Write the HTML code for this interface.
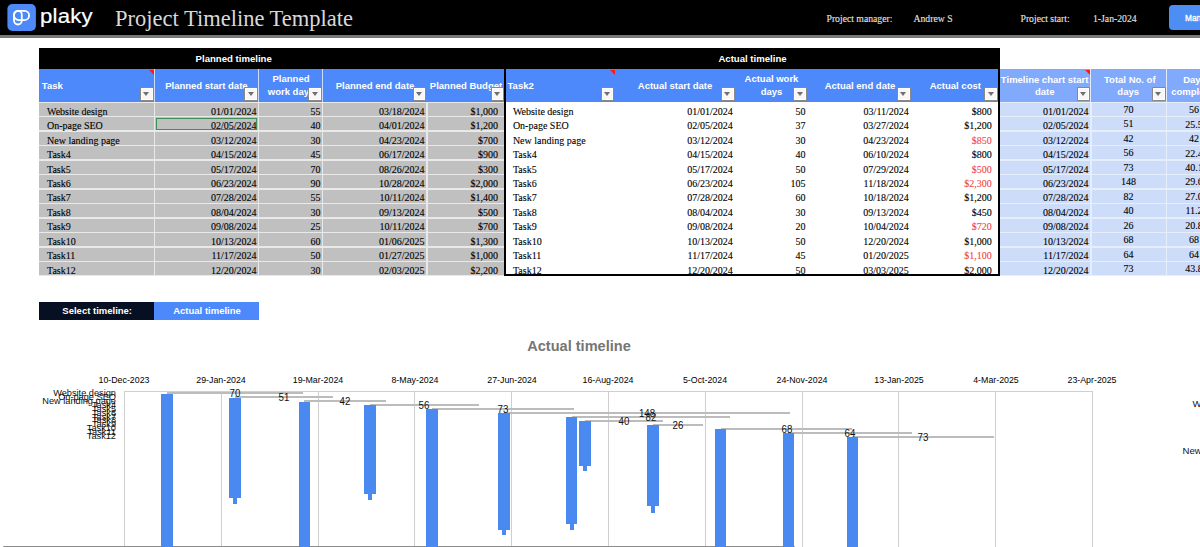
<!DOCTYPE html><html><head><meta charset="utf-8"><style>
*{margin:0;padding:0}
html,body{width:1200px;height:547px;overflow:hidden;background:#fff;position:relative}
.t,.r,.dd,.tri{position:absolute}
.t{white-space:nowrap}
.s{-webkit-text-stroke:0.1px currentColor}
.dd{width:13.5px;height:13.5px;background:#f7f7f7;border:1px solid rgba(0,0,0,0.45);border-radius:1.2px;box-sizing:border-box;box-shadow:inset 0 0 0 1px #fff}
.dd i{position:absolute;left:2.4px;top:3.9px;width:0;height:0;border-style:solid;border-width:4.4px 3.6px 0 3.6px;border-color:#6f6f6f transparent transparent transparent}
.tri{width:0;height:0;border-style:solid;border-color:transparent #ff1a1a transparent transparent}
</style></head><body><div class="r" style="left:0.00px;top:0.00px;width:1200.00px;height:35.00px;background:#000;"></div>
<div class="r" style="left:0.00px;top:35.00px;width:1200.00px;height:3.00px;background:#787878;"></div>
<svg class="r" style="left:7px;top:4px" width="29" height="27" viewBox="0 0 29 27"><rect x="0.4" y="0" width="28.5" height="27" rx="5" fill="#4d8af7"/><rect x="7" y="6.8" width="7.8" height="13.7" rx="3.9" fill="none" stroke="#fff" stroke-width="1.8"/><rect x="7" y="6.8" width="15.1" height="9.3" rx="4.65" fill="none" stroke="#fff" stroke-width="1.8"/></svg>
<div class="t" style="left:40.20px;top:4.01px;font-family:'Liberation Sans', sans-serif;font-size:20.5px;line-height:23.57px;color:#fff;font-weight:normal;letter-spacing:0.2px;-webkit-text-stroke:0.2px #fff;transform-origin:0 50%;transform:scaleX(1.08);">plaky</div>
<div class="t" style="left:115.00px;top:5.87px;font-family:'Liberation Serif', serif;font-size:22.5px;line-height:25.87px;color:#d9d9d9;font-weight:normal;">Project Timeline Template</div>
<div class="t s" style="left:826.50px;top:13.05px;font-family:'Liberation Serif', serif;font-size:9.7px;line-height:11.15px;color:#e6e6e6;font-weight:normal;">Project manager:</div>
<div class="t s" style="left:913.50px;top:13.05px;font-family:'Liberation Serif', serif;font-size:9.7px;line-height:11.15px;color:#e6e6e6;font-weight:normal;">Andrew S</div>
<div class="t s" style="left:1020.50px;top:13.05px;font-family:'Liberation Serif', serif;font-size:9.7px;line-height:11.15px;color:#e6e6e6;font-weight:normal;">Project start:</div>
<div class="t s" style="left:1093.00px;top:13.05px;font-family:'Liberation Serif', serif;font-size:9.7px;line-height:11.15px;color:#e6e6e6;font-weight:normal;">1-Jan-2024</div>
<div class="r" style="left:1169.00px;top:5.10px;width:60.00px;height:25.20px;background:#4d8ef5;border-radius:4px;"></div>
<div class="t" style="left:1185.30px;top:11.77px;font-family:'Liberation Sans', sans-serif;font-size:9.8px;line-height:11.27px;color:#fff;font-weight:normal;transform-origin:0 50%;transform:scaleX(0.85);-webkit-text-stroke:0.35px #fff;">Manage</div>
<div class="r" style="left:39.00px;top:48.20px;width:466.00px;height:20.60px;background:#000;"></div>
<div class="t" style="left:-66.30px;width:600px;text-align:center;top:53.35px;font-family:'Liberation Sans', sans-serif;font-size:9.6px;line-height:11.04px;color:#fff;font-weight:bold;">Planned timeline</div>
<div class="r" style="left:504.00px;top:47.50px;width:496.00px;height:21.30px;background:#000;"></div>
<div class="t" style="left:452.50px;width:600px;text-align:center;top:53.35px;font-family:'Liberation Sans', sans-serif;font-size:9.6px;line-height:11.04px;color:#fff;font-weight:bold;">Actual timeline</div>
<div class="r" style="left:39.00px;top:68.80px;width:466.00px;height:33.00px;background:#4e89fb;"></div>
<div class="r" style="left:506.00px;top:68.80px;width:492.50px;height:33.00px;background:#4e89fb;"></div>
<div class="r" style="left:1000.00px;top:68.80px;width:200.00px;height:33.00px;background:#81aafd;"></div>
<div class="r" style="left:154.20px;top:68.80px;width:1.20px;height:33.70px;background:#cfdcf7;"></div>
<div class="r" style="left:258.20px;top:68.80px;width:1.20px;height:33.70px;background:#cfdcf7;"></div>
<div class="r" style="left:321.60px;top:68.80px;width:1.20px;height:33.70px;background:#cfdcf7;"></div>
<div class="r" style="left:1090.30px;top:68.80px;width:1.20px;height:33.70px;background:#e3ebfb;"></div>
<div class="r" style="left:1166.20px;top:68.80px;width:1.20px;height:33.70px;background:#e3ebfb;"></div>
<div class="r" style="left:39.00px;top:101.80px;width:465.00px;height:174.00px;background:#e9e9e9;"></div>
<div class="r" style="left:1000.00px;top:101.80px;width:200.00px;height:174.00px;background:#e6eefc;"></div>
<div class="r" style="left:39.00px;top:102.90px;width:115.20px;height:13.08px;background:#c0c0c0;"></div>
<div class="r" style="left:155.40px;top:102.90px;width:102.80px;height:13.08px;background:#c0c0c0;"></div>
<div class="r" style="left:259.40px;top:102.90px;width:62.20px;height:13.08px;background:#c0c0c0;"></div>
<div class="r" style="left:322.80px;top:102.90px;width:103.50px;height:13.08px;background:#c0c0c0;"></div>
<div class="r" style="left:427.50px;top:102.90px;width:76.50px;height:13.08px;background:#c0c0c0;"></div>
<div class="r" style="left:39.00px;top:117.38px;width:115.20px;height:13.08px;background:#c0c0c0;"></div>
<div class="r" style="left:155.40px;top:117.38px;width:102.80px;height:13.08px;background:#c0c0c0;"></div>
<div class="r" style="left:259.40px;top:117.38px;width:62.20px;height:13.08px;background:#c0c0c0;"></div>
<div class="r" style="left:322.80px;top:117.38px;width:103.50px;height:13.08px;background:#c0c0c0;"></div>
<div class="r" style="left:427.50px;top:117.38px;width:76.50px;height:13.08px;background:#c0c0c0;"></div>
<div class="r" style="left:39.00px;top:131.86px;width:115.20px;height:13.08px;background:#c0c0c0;"></div>
<div class="r" style="left:155.40px;top:131.86px;width:102.80px;height:13.08px;background:#c0c0c0;"></div>
<div class="r" style="left:259.40px;top:131.86px;width:62.20px;height:13.08px;background:#c0c0c0;"></div>
<div class="r" style="left:322.80px;top:131.86px;width:103.50px;height:13.08px;background:#c0c0c0;"></div>
<div class="r" style="left:427.50px;top:131.86px;width:76.50px;height:13.08px;background:#c0c0c0;"></div>
<div class="r" style="left:39.00px;top:146.34px;width:115.20px;height:13.08px;background:#c0c0c0;"></div>
<div class="r" style="left:155.40px;top:146.34px;width:102.80px;height:13.08px;background:#c0c0c0;"></div>
<div class="r" style="left:259.40px;top:146.34px;width:62.20px;height:13.08px;background:#c0c0c0;"></div>
<div class="r" style="left:322.80px;top:146.34px;width:103.50px;height:13.08px;background:#c0c0c0;"></div>
<div class="r" style="left:427.50px;top:146.34px;width:76.50px;height:13.08px;background:#c0c0c0;"></div>
<div class="r" style="left:39.00px;top:160.82px;width:115.20px;height:13.08px;background:#c0c0c0;"></div>
<div class="r" style="left:155.40px;top:160.82px;width:102.80px;height:13.08px;background:#c0c0c0;"></div>
<div class="r" style="left:259.40px;top:160.82px;width:62.20px;height:13.08px;background:#c0c0c0;"></div>
<div class="r" style="left:322.80px;top:160.82px;width:103.50px;height:13.08px;background:#c0c0c0;"></div>
<div class="r" style="left:427.50px;top:160.82px;width:76.50px;height:13.08px;background:#c0c0c0;"></div>
<div class="r" style="left:39.00px;top:175.30px;width:115.20px;height:13.08px;background:#c0c0c0;"></div>
<div class="r" style="left:155.40px;top:175.30px;width:102.80px;height:13.08px;background:#c0c0c0;"></div>
<div class="r" style="left:259.40px;top:175.30px;width:62.20px;height:13.08px;background:#c0c0c0;"></div>
<div class="r" style="left:322.80px;top:175.30px;width:103.50px;height:13.08px;background:#c0c0c0;"></div>
<div class="r" style="left:427.50px;top:175.30px;width:76.50px;height:13.08px;background:#c0c0c0;"></div>
<div class="r" style="left:39.00px;top:189.78px;width:115.20px;height:13.08px;background:#c0c0c0;"></div>
<div class="r" style="left:155.40px;top:189.78px;width:102.80px;height:13.08px;background:#c0c0c0;"></div>
<div class="r" style="left:259.40px;top:189.78px;width:62.20px;height:13.08px;background:#c0c0c0;"></div>
<div class="r" style="left:322.80px;top:189.78px;width:103.50px;height:13.08px;background:#c0c0c0;"></div>
<div class="r" style="left:427.50px;top:189.78px;width:76.50px;height:13.08px;background:#c0c0c0;"></div>
<div class="r" style="left:39.00px;top:204.26px;width:115.20px;height:13.08px;background:#c0c0c0;"></div>
<div class="r" style="left:155.40px;top:204.26px;width:102.80px;height:13.08px;background:#c0c0c0;"></div>
<div class="r" style="left:259.40px;top:204.26px;width:62.20px;height:13.08px;background:#c0c0c0;"></div>
<div class="r" style="left:322.80px;top:204.26px;width:103.50px;height:13.08px;background:#c0c0c0;"></div>
<div class="r" style="left:427.50px;top:204.26px;width:76.50px;height:13.08px;background:#c0c0c0;"></div>
<div class="r" style="left:39.00px;top:218.74px;width:115.20px;height:13.08px;background:#c0c0c0;"></div>
<div class="r" style="left:155.40px;top:218.74px;width:102.80px;height:13.08px;background:#c0c0c0;"></div>
<div class="r" style="left:259.40px;top:218.74px;width:62.20px;height:13.08px;background:#c0c0c0;"></div>
<div class="r" style="left:322.80px;top:218.74px;width:103.50px;height:13.08px;background:#c0c0c0;"></div>
<div class="r" style="left:427.50px;top:218.74px;width:76.50px;height:13.08px;background:#c0c0c0;"></div>
<div class="r" style="left:39.00px;top:233.22px;width:115.20px;height:13.08px;background:#c0c0c0;"></div>
<div class="r" style="left:155.40px;top:233.22px;width:102.80px;height:13.08px;background:#c0c0c0;"></div>
<div class="r" style="left:259.40px;top:233.22px;width:62.20px;height:13.08px;background:#c0c0c0;"></div>
<div class="r" style="left:322.80px;top:233.22px;width:103.50px;height:13.08px;background:#c0c0c0;"></div>
<div class="r" style="left:427.50px;top:233.22px;width:76.50px;height:13.08px;background:#c0c0c0;"></div>
<div class="r" style="left:39.00px;top:247.70px;width:115.20px;height:13.08px;background:#c0c0c0;"></div>
<div class="r" style="left:155.40px;top:247.70px;width:102.80px;height:13.08px;background:#c0c0c0;"></div>
<div class="r" style="left:259.40px;top:247.70px;width:62.20px;height:13.08px;background:#c0c0c0;"></div>
<div class="r" style="left:322.80px;top:247.70px;width:103.50px;height:13.08px;background:#c0c0c0;"></div>
<div class="r" style="left:427.50px;top:247.70px;width:76.50px;height:13.08px;background:#c0c0c0;"></div>
<div class="r" style="left:39.00px;top:262.18px;width:115.20px;height:13.08px;background:#c0c0c0;"></div>
<div class="r" style="left:155.40px;top:262.18px;width:102.80px;height:13.08px;background:#c0c0c0;"></div>
<div class="r" style="left:259.40px;top:262.18px;width:62.20px;height:13.08px;background:#c0c0c0;"></div>
<div class="r" style="left:322.80px;top:262.18px;width:103.50px;height:13.08px;background:#c0c0c0;"></div>
<div class="r" style="left:427.50px;top:262.18px;width:76.50px;height:13.08px;background:#c0c0c0;"></div>
<div class="r" style="left:1000.00px;top:102.90px;width:90.30px;height:13.08px;background:#cddcf9;"></div>
<div class="r" style="left:1091.50px;top:102.90px;width:74.70px;height:13.08px;background:#cddcf9;"></div>
<div class="r" style="left:1167.40px;top:102.90px;width:32.60px;height:13.08px;background:#cddcf9;"></div>
<div class="r" style="left:1000.00px;top:117.38px;width:90.30px;height:13.08px;background:#cddcf9;"></div>
<div class="r" style="left:1091.50px;top:117.38px;width:74.70px;height:13.08px;background:#cddcf9;"></div>
<div class="r" style="left:1167.40px;top:117.38px;width:32.60px;height:13.08px;background:#cddcf9;"></div>
<div class="r" style="left:1000.00px;top:131.86px;width:90.30px;height:13.08px;background:#cddcf9;"></div>
<div class="r" style="left:1091.50px;top:131.86px;width:74.70px;height:13.08px;background:#cddcf9;"></div>
<div class="r" style="left:1167.40px;top:131.86px;width:32.60px;height:13.08px;background:#cddcf9;"></div>
<div class="r" style="left:1000.00px;top:146.34px;width:90.30px;height:13.08px;background:#cddcf9;"></div>
<div class="r" style="left:1091.50px;top:146.34px;width:74.70px;height:13.08px;background:#cddcf9;"></div>
<div class="r" style="left:1167.40px;top:146.34px;width:32.60px;height:13.08px;background:#cddcf9;"></div>
<div class="r" style="left:1000.00px;top:160.82px;width:90.30px;height:13.08px;background:#cddcf9;"></div>
<div class="r" style="left:1091.50px;top:160.82px;width:74.70px;height:13.08px;background:#cddcf9;"></div>
<div class="r" style="left:1167.40px;top:160.82px;width:32.60px;height:13.08px;background:#cddcf9;"></div>
<div class="r" style="left:1000.00px;top:175.30px;width:90.30px;height:13.08px;background:#cddcf9;"></div>
<div class="r" style="left:1091.50px;top:175.30px;width:74.70px;height:13.08px;background:#cddcf9;"></div>
<div class="r" style="left:1167.40px;top:175.30px;width:32.60px;height:13.08px;background:#cddcf9;"></div>
<div class="r" style="left:1000.00px;top:189.78px;width:90.30px;height:13.08px;background:#cddcf9;"></div>
<div class="r" style="left:1091.50px;top:189.78px;width:74.70px;height:13.08px;background:#cddcf9;"></div>
<div class="r" style="left:1167.40px;top:189.78px;width:32.60px;height:13.08px;background:#cddcf9;"></div>
<div class="r" style="left:1000.00px;top:204.26px;width:90.30px;height:13.08px;background:#cddcf9;"></div>
<div class="r" style="left:1091.50px;top:204.26px;width:74.70px;height:13.08px;background:#cddcf9;"></div>
<div class="r" style="left:1167.40px;top:204.26px;width:32.60px;height:13.08px;background:#cddcf9;"></div>
<div class="r" style="left:1000.00px;top:218.74px;width:90.30px;height:13.08px;background:#cddcf9;"></div>
<div class="r" style="left:1091.50px;top:218.74px;width:74.70px;height:13.08px;background:#cddcf9;"></div>
<div class="r" style="left:1167.40px;top:218.74px;width:32.60px;height:13.08px;background:#cddcf9;"></div>
<div class="r" style="left:1000.00px;top:233.22px;width:90.30px;height:13.08px;background:#cddcf9;"></div>
<div class="r" style="left:1091.50px;top:233.22px;width:74.70px;height:13.08px;background:#cddcf9;"></div>
<div class="r" style="left:1167.40px;top:233.22px;width:32.60px;height:13.08px;background:#cddcf9;"></div>
<div class="r" style="left:1000.00px;top:247.70px;width:90.30px;height:13.08px;background:#cddcf9;"></div>
<div class="r" style="left:1091.50px;top:247.70px;width:74.70px;height:13.08px;background:#cddcf9;"></div>
<div class="r" style="left:1167.40px;top:247.70px;width:32.60px;height:13.08px;background:#cddcf9;"></div>
<div class="r" style="left:1000.00px;top:262.18px;width:90.30px;height:13.08px;background:#cddcf9;"></div>
<div class="r" style="left:1091.50px;top:262.18px;width:74.70px;height:13.08px;background:#cddcf9;"></div>
<div class="r" style="left:1167.40px;top:262.18px;width:32.60px;height:13.08px;background:#cddcf9;"></div>
<div class="r" style="left:503.80px;top:47.50px;width:2.00px;height:228.50px;background:#000;"></div>
<div class="r" style="left:998.00px;top:47.50px;width:2.00px;height:228.50px;background:#000;"></div>
<div class="r" style="left:503.80px;top:274.30px;width:496.00px;height:1.80px;background:#000;"></div>
<div class="t s" style="left:47.00px;top:105.58px;font-family:'Liberation Serif', serif;font-size:10px;line-height:11.50px;color:#000;font-weight:normal;">Website design</div>
<div class="t s" style="left:-143.40px;width:400px;text-align:right;top:105.58px;font-family:'Liberation Serif', serif;font-size:10px;line-height:11.50px;color:#000;font-weight:normal;">01/01/2024</div>
<div class="t s" style="left:-79.60px;width:400px;text-align:right;top:105.58px;font-family:'Liberation Serif', serif;font-size:10px;line-height:11.50px;color:#000;font-weight:normal;">55</div>
<div class="t s" style="left:24.60px;width:400px;text-align:right;top:105.58px;font-family:'Liberation Serif', serif;font-size:10px;line-height:11.50px;color:#000;font-weight:normal;">03/18/2024</div>
<div class="t s" style="left:98.00px;width:400px;text-align:right;top:105.58px;font-family:'Liberation Serif', serif;font-size:10px;line-height:11.50px;color:#000;font-weight:normal;">$1,000</div>
<div class="t s" style="left:47.00px;top:120.06px;font-family:'Liberation Serif', serif;font-size:10px;line-height:11.50px;color:#000;font-weight:normal;">On-page SEO</div>
<div class="t s" style="left:-143.40px;width:400px;text-align:right;top:120.06px;font-family:'Liberation Serif', serif;font-size:10px;line-height:11.50px;color:#000;font-weight:normal;">02/05/2024</div>
<div class="t s" style="left:-79.60px;width:400px;text-align:right;top:120.06px;font-family:'Liberation Serif', serif;font-size:10px;line-height:11.50px;color:#000;font-weight:normal;">40</div>
<div class="t s" style="left:24.60px;width:400px;text-align:right;top:120.06px;font-family:'Liberation Serif', serif;font-size:10px;line-height:11.50px;color:#000;font-weight:normal;">04/01/2024</div>
<div class="t s" style="left:98.00px;width:400px;text-align:right;top:120.06px;font-family:'Liberation Serif', serif;font-size:10px;line-height:11.50px;color:#000;font-weight:normal;">$1,200</div>
<div class="t s" style="left:47.00px;top:134.53px;font-family:'Liberation Serif', serif;font-size:10px;line-height:11.50px;color:#000;font-weight:normal;">New landing page</div>
<div class="t s" style="left:-143.40px;width:400px;text-align:right;top:134.53px;font-family:'Liberation Serif', serif;font-size:10px;line-height:11.50px;color:#000;font-weight:normal;">03/12/2024</div>
<div class="t s" style="left:-79.60px;width:400px;text-align:right;top:134.53px;font-family:'Liberation Serif', serif;font-size:10px;line-height:11.50px;color:#000;font-weight:normal;">30</div>
<div class="t s" style="left:24.60px;width:400px;text-align:right;top:134.53px;font-family:'Liberation Serif', serif;font-size:10px;line-height:11.50px;color:#000;font-weight:normal;">04/23/2024</div>
<div class="t s" style="left:98.00px;width:400px;text-align:right;top:134.53px;font-family:'Liberation Serif', serif;font-size:10px;line-height:11.50px;color:#000;font-weight:normal;">$700</div>
<div class="t s" style="left:47.00px;top:149.01px;font-family:'Liberation Serif', serif;font-size:10px;line-height:11.50px;color:#000;font-weight:normal;">Task4</div>
<div class="t s" style="left:-143.40px;width:400px;text-align:right;top:149.01px;font-family:'Liberation Serif', serif;font-size:10px;line-height:11.50px;color:#000;font-weight:normal;">04/15/2024</div>
<div class="t s" style="left:-79.60px;width:400px;text-align:right;top:149.01px;font-family:'Liberation Serif', serif;font-size:10px;line-height:11.50px;color:#000;font-weight:normal;">45</div>
<div class="t s" style="left:24.60px;width:400px;text-align:right;top:149.01px;font-family:'Liberation Serif', serif;font-size:10px;line-height:11.50px;color:#000;font-weight:normal;">06/17/2024</div>
<div class="t s" style="left:98.00px;width:400px;text-align:right;top:149.01px;font-family:'Liberation Serif', serif;font-size:10px;line-height:11.50px;color:#000;font-weight:normal;">$900</div>
<div class="t s" style="left:47.00px;top:163.50px;font-family:'Liberation Serif', serif;font-size:10px;line-height:11.50px;color:#000;font-weight:normal;">Task5</div>
<div class="t s" style="left:-143.40px;width:400px;text-align:right;top:163.50px;font-family:'Liberation Serif', serif;font-size:10px;line-height:11.50px;color:#000;font-weight:normal;">05/17/2024</div>
<div class="t s" style="left:-79.60px;width:400px;text-align:right;top:163.50px;font-family:'Liberation Serif', serif;font-size:10px;line-height:11.50px;color:#000;font-weight:normal;">70</div>
<div class="t s" style="left:24.60px;width:400px;text-align:right;top:163.50px;font-family:'Liberation Serif', serif;font-size:10px;line-height:11.50px;color:#000;font-weight:normal;">08/26/2024</div>
<div class="t s" style="left:98.00px;width:400px;text-align:right;top:163.50px;font-family:'Liberation Serif', serif;font-size:10px;line-height:11.50px;color:#000;font-weight:normal;">$300</div>
<div class="t s" style="left:47.00px;top:177.98px;font-family:'Liberation Serif', serif;font-size:10px;line-height:11.50px;color:#000;font-weight:normal;">Task6</div>
<div class="t s" style="left:-143.40px;width:400px;text-align:right;top:177.98px;font-family:'Liberation Serif', serif;font-size:10px;line-height:11.50px;color:#000;font-weight:normal;">06/23/2024</div>
<div class="t s" style="left:-79.60px;width:400px;text-align:right;top:177.98px;font-family:'Liberation Serif', serif;font-size:10px;line-height:11.50px;color:#000;font-weight:normal;">90</div>
<div class="t s" style="left:24.60px;width:400px;text-align:right;top:177.98px;font-family:'Liberation Serif', serif;font-size:10px;line-height:11.50px;color:#000;font-weight:normal;">10/28/2024</div>
<div class="t s" style="left:98.00px;width:400px;text-align:right;top:177.98px;font-family:'Liberation Serif', serif;font-size:10px;line-height:11.50px;color:#000;font-weight:normal;">$2,000</div>
<div class="t s" style="left:47.00px;top:192.45px;font-family:'Liberation Serif', serif;font-size:10px;line-height:11.50px;color:#000;font-weight:normal;">Task7</div>
<div class="t s" style="left:-143.40px;width:400px;text-align:right;top:192.45px;font-family:'Liberation Serif', serif;font-size:10px;line-height:11.50px;color:#000;font-weight:normal;">07/28/2024</div>
<div class="t s" style="left:-79.60px;width:400px;text-align:right;top:192.45px;font-family:'Liberation Serif', serif;font-size:10px;line-height:11.50px;color:#000;font-weight:normal;">55</div>
<div class="t s" style="left:24.60px;width:400px;text-align:right;top:192.45px;font-family:'Liberation Serif', serif;font-size:10px;line-height:11.50px;color:#000;font-weight:normal;">10/11/2024</div>
<div class="t s" style="left:98.00px;width:400px;text-align:right;top:192.45px;font-family:'Liberation Serif', serif;font-size:10px;line-height:11.50px;color:#000;font-weight:normal;">$1,400</div>
<div class="t s" style="left:47.00px;top:206.94px;font-family:'Liberation Serif', serif;font-size:10px;line-height:11.50px;color:#000;font-weight:normal;">Task8</div>
<div class="t s" style="left:-143.40px;width:400px;text-align:right;top:206.94px;font-family:'Liberation Serif', serif;font-size:10px;line-height:11.50px;color:#000;font-weight:normal;">08/04/2024</div>
<div class="t s" style="left:-79.60px;width:400px;text-align:right;top:206.94px;font-family:'Liberation Serif', serif;font-size:10px;line-height:11.50px;color:#000;font-weight:normal;">30</div>
<div class="t s" style="left:24.60px;width:400px;text-align:right;top:206.94px;font-family:'Liberation Serif', serif;font-size:10px;line-height:11.50px;color:#000;font-weight:normal;">09/13/2024</div>
<div class="t s" style="left:98.00px;width:400px;text-align:right;top:206.94px;font-family:'Liberation Serif', serif;font-size:10px;line-height:11.50px;color:#000;font-weight:normal;">$500</div>
<div class="t s" style="left:47.00px;top:221.42px;font-family:'Liberation Serif', serif;font-size:10px;line-height:11.50px;color:#000;font-weight:normal;">Task9</div>
<div class="t s" style="left:-143.40px;width:400px;text-align:right;top:221.42px;font-family:'Liberation Serif', serif;font-size:10px;line-height:11.50px;color:#000;font-weight:normal;">09/08/2024</div>
<div class="t s" style="left:-79.60px;width:400px;text-align:right;top:221.42px;font-family:'Liberation Serif', serif;font-size:10px;line-height:11.50px;color:#000;font-weight:normal;">25</div>
<div class="t s" style="left:24.60px;width:400px;text-align:right;top:221.42px;font-family:'Liberation Serif', serif;font-size:10px;line-height:11.50px;color:#000;font-weight:normal;">10/11/2024</div>
<div class="t s" style="left:98.00px;width:400px;text-align:right;top:221.42px;font-family:'Liberation Serif', serif;font-size:10px;line-height:11.50px;color:#000;font-weight:normal;">$700</div>
<div class="t s" style="left:47.00px;top:235.89px;font-family:'Liberation Serif', serif;font-size:10px;line-height:11.50px;color:#000;font-weight:normal;">Task10</div>
<div class="t s" style="left:-143.40px;width:400px;text-align:right;top:235.89px;font-family:'Liberation Serif', serif;font-size:10px;line-height:11.50px;color:#000;font-weight:normal;">10/13/2024</div>
<div class="t s" style="left:-79.60px;width:400px;text-align:right;top:235.89px;font-family:'Liberation Serif', serif;font-size:10px;line-height:11.50px;color:#000;font-weight:normal;">60</div>
<div class="t s" style="left:24.60px;width:400px;text-align:right;top:235.89px;font-family:'Liberation Serif', serif;font-size:10px;line-height:11.50px;color:#000;font-weight:normal;">01/06/2025</div>
<div class="t s" style="left:98.00px;width:400px;text-align:right;top:235.89px;font-family:'Liberation Serif', serif;font-size:10px;line-height:11.50px;color:#000;font-weight:normal;">$1,300</div>
<div class="t s" style="left:47.00px;top:250.38px;font-family:'Liberation Serif', serif;font-size:10px;line-height:11.50px;color:#000;font-weight:normal;">Task11</div>
<div class="t s" style="left:-143.40px;width:400px;text-align:right;top:250.38px;font-family:'Liberation Serif', serif;font-size:10px;line-height:11.50px;color:#000;font-weight:normal;">11/17/2024</div>
<div class="t s" style="left:-79.60px;width:400px;text-align:right;top:250.38px;font-family:'Liberation Serif', serif;font-size:10px;line-height:11.50px;color:#000;font-weight:normal;">50</div>
<div class="t s" style="left:24.60px;width:400px;text-align:right;top:250.38px;font-family:'Liberation Serif', serif;font-size:10px;line-height:11.50px;color:#000;font-weight:normal;">01/27/2025</div>
<div class="t s" style="left:98.00px;width:400px;text-align:right;top:250.38px;font-family:'Liberation Serif', serif;font-size:10px;line-height:11.50px;color:#000;font-weight:normal;">$1,000</div>
<div class="t s" style="left:47.00px;top:264.86px;font-family:'Liberation Serif', serif;font-size:10px;line-height:11.50px;color:#000;font-weight:normal;">Task12</div>
<div class="t s" style="left:-143.40px;width:400px;text-align:right;top:264.86px;font-family:'Liberation Serif', serif;font-size:10px;line-height:11.50px;color:#000;font-weight:normal;">12/20/2024</div>
<div class="t s" style="left:-79.60px;width:400px;text-align:right;top:264.86px;font-family:'Liberation Serif', serif;font-size:10px;line-height:11.50px;color:#000;font-weight:normal;">30</div>
<div class="t s" style="left:24.60px;width:400px;text-align:right;top:264.86px;font-family:'Liberation Serif', serif;font-size:10px;line-height:11.50px;color:#000;font-weight:normal;">02/03/2025</div>
<div class="t s" style="left:98.00px;width:400px;text-align:right;top:264.86px;font-family:'Liberation Serif', serif;font-size:10px;line-height:11.50px;color:#000;font-weight:normal;">$2,200</div>
<div class="t s" style="left:512.90px;top:105.58px;font-family:'Liberation Serif', serif;font-size:10px;line-height:11.50px;color:#000;font-weight:normal;">Website design</div>
<div class="t s" style="left:332.80px;width:400px;text-align:right;top:105.58px;font-family:'Liberation Serif', serif;font-size:10px;line-height:11.50px;color:#000;font-weight:normal;">01/01/2024</div>
<div class="t s" style="left:405.60px;width:400px;text-align:right;top:105.58px;font-family:'Liberation Serif', serif;font-size:10px;line-height:11.50px;color:#000;font-weight:normal;">50</div>
<div class="t s" style="left:508.80px;width:400px;text-align:right;top:105.58px;font-family:'Liberation Serif', serif;font-size:10px;line-height:11.50px;color:#000;font-weight:normal;">03/11/2024</div>
<div class="t s" style="left:591.70px;width:400px;text-align:right;top:105.58px;font-family:'Liberation Serif', serif;font-size:10px;line-height:11.50px;color:#000;font-weight:normal;">$800</div>
<div class="t s" style="left:512.90px;top:120.06px;font-family:'Liberation Serif', serif;font-size:10px;line-height:11.50px;color:#000;font-weight:normal;">On-page SEO</div>
<div class="t s" style="left:332.80px;width:400px;text-align:right;top:120.06px;font-family:'Liberation Serif', serif;font-size:10px;line-height:11.50px;color:#000;font-weight:normal;">02/05/2024</div>
<div class="t s" style="left:405.60px;width:400px;text-align:right;top:120.06px;font-family:'Liberation Serif', serif;font-size:10px;line-height:11.50px;color:#000;font-weight:normal;">37</div>
<div class="t s" style="left:508.80px;width:400px;text-align:right;top:120.06px;font-family:'Liberation Serif', serif;font-size:10px;line-height:11.50px;color:#000;font-weight:normal;">03/27/2024</div>
<div class="t s" style="left:591.70px;width:400px;text-align:right;top:120.06px;font-family:'Liberation Serif', serif;font-size:10px;line-height:11.50px;color:#000;font-weight:normal;">$1,200</div>
<div class="t s" style="left:512.90px;top:134.53px;font-family:'Liberation Serif', serif;font-size:10px;line-height:11.50px;color:#000;font-weight:normal;">New landing page</div>
<div class="t s" style="left:332.80px;width:400px;text-align:right;top:134.53px;font-family:'Liberation Serif', serif;font-size:10px;line-height:11.50px;color:#000;font-weight:normal;">03/12/2024</div>
<div class="t s" style="left:405.60px;width:400px;text-align:right;top:134.53px;font-family:'Liberation Serif', serif;font-size:10px;line-height:11.50px;color:#000;font-weight:normal;">30</div>
<div class="t s" style="left:508.80px;width:400px;text-align:right;top:134.53px;font-family:'Liberation Serif', serif;font-size:10px;line-height:11.50px;color:#000;font-weight:normal;">04/23/2024</div>
<div class="t s" style="left:591.70px;width:400px;text-align:right;top:134.53px;font-family:'Liberation Serif', serif;font-size:10px;line-height:11.50px;color:#f04545;font-weight:normal;">$850</div>
<div class="t s" style="left:512.90px;top:149.01px;font-family:'Liberation Serif', serif;font-size:10px;line-height:11.50px;color:#000;font-weight:normal;">Task4</div>
<div class="t s" style="left:332.80px;width:400px;text-align:right;top:149.01px;font-family:'Liberation Serif', serif;font-size:10px;line-height:11.50px;color:#000;font-weight:normal;">04/15/2024</div>
<div class="t s" style="left:405.60px;width:400px;text-align:right;top:149.01px;font-family:'Liberation Serif', serif;font-size:10px;line-height:11.50px;color:#000;font-weight:normal;">40</div>
<div class="t s" style="left:508.80px;width:400px;text-align:right;top:149.01px;font-family:'Liberation Serif', serif;font-size:10px;line-height:11.50px;color:#000;font-weight:normal;">06/10/2024</div>
<div class="t s" style="left:591.70px;width:400px;text-align:right;top:149.01px;font-family:'Liberation Serif', serif;font-size:10px;line-height:11.50px;color:#000;font-weight:normal;">$800</div>
<div class="t s" style="left:512.90px;top:163.50px;font-family:'Liberation Serif', serif;font-size:10px;line-height:11.50px;color:#000;font-weight:normal;">Task5</div>
<div class="t s" style="left:332.80px;width:400px;text-align:right;top:163.50px;font-family:'Liberation Serif', serif;font-size:10px;line-height:11.50px;color:#000;font-weight:normal;">05/17/2024</div>
<div class="t s" style="left:405.60px;width:400px;text-align:right;top:163.50px;font-family:'Liberation Serif', serif;font-size:10px;line-height:11.50px;color:#000;font-weight:normal;">50</div>
<div class="t s" style="left:508.80px;width:400px;text-align:right;top:163.50px;font-family:'Liberation Serif', serif;font-size:10px;line-height:11.50px;color:#000;font-weight:normal;">07/29/2024</div>
<div class="t s" style="left:591.70px;width:400px;text-align:right;top:163.50px;font-family:'Liberation Serif', serif;font-size:10px;line-height:11.50px;color:#f04545;font-weight:normal;">$500</div>
<div class="t s" style="left:512.90px;top:177.98px;font-family:'Liberation Serif', serif;font-size:10px;line-height:11.50px;color:#000;font-weight:normal;">Task6</div>
<div class="t s" style="left:332.80px;width:400px;text-align:right;top:177.98px;font-family:'Liberation Serif', serif;font-size:10px;line-height:11.50px;color:#000;font-weight:normal;">06/23/2024</div>
<div class="t s" style="left:405.60px;width:400px;text-align:right;top:177.98px;font-family:'Liberation Serif', serif;font-size:10px;line-height:11.50px;color:#000;font-weight:normal;">105</div>
<div class="t s" style="left:508.80px;width:400px;text-align:right;top:177.98px;font-family:'Liberation Serif', serif;font-size:10px;line-height:11.50px;color:#000;font-weight:normal;">11/18/2024</div>
<div class="t s" style="left:591.70px;width:400px;text-align:right;top:177.98px;font-family:'Liberation Serif', serif;font-size:10px;line-height:11.50px;color:#f04545;font-weight:normal;">$2,300</div>
<div class="t s" style="left:512.90px;top:192.45px;font-family:'Liberation Serif', serif;font-size:10px;line-height:11.50px;color:#000;font-weight:normal;">Task7</div>
<div class="t s" style="left:332.80px;width:400px;text-align:right;top:192.45px;font-family:'Liberation Serif', serif;font-size:10px;line-height:11.50px;color:#000;font-weight:normal;">07/28/2024</div>
<div class="t s" style="left:405.60px;width:400px;text-align:right;top:192.45px;font-family:'Liberation Serif', serif;font-size:10px;line-height:11.50px;color:#000;font-weight:normal;">60</div>
<div class="t s" style="left:508.80px;width:400px;text-align:right;top:192.45px;font-family:'Liberation Serif', serif;font-size:10px;line-height:11.50px;color:#000;font-weight:normal;">10/18/2024</div>
<div class="t s" style="left:591.70px;width:400px;text-align:right;top:192.45px;font-family:'Liberation Serif', serif;font-size:10px;line-height:11.50px;color:#000;font-weight:normal;">$1,200</div>
<div class="t s" style="left:512.90px;top:206.94px;font-family:'Liberation Serif', serif;font-size:10px;line-height:11.50px;color:#000;font-weight:normal;">Task8</div>
<div class="t s" style="left:332.80px;width:400px;text-align:right;top:206.94px;font-family:'Liberation Serif', serif;font-size:10px;line-height:11.50px;color:#000;font-weight:normal;">08/04/2024</div>
<div class="t s" style="left:405.60px;width:400px;text-align:right;top:206.94px;font-family:'Liberation Serif', serif;font-size:10px;line-height:11.50px;color:#000;font-weight:normal;">30</div>
<div class="t s" style="left:508.80px;width:400px;text-align:right;top:206.94px;font-family:'Liberation Serif', serif;font-size:10px;line-height:11.50px;color:#000;font-weight:normal;">09/13/2024</div>
<div class="t s" style="left:591.70px;width:400px;text-align:right;top:206.94px;font-family:'Liberation Serif', serif;font-size:10px;line-height:11.50px;color:#000;font-weight:normal;">$450</div>
<div class="t s" style="left:512.90px;top:221.42px;font-family:'Liberation Serif', serif;font-size:10px;line-height:11.50px;color:#000;font-weight:normal;">Task9</div>
<div class="t s" style="left:332.80px;width:400px;text-align:right;top:221.42px;font-family:'Liberation Serif', serif;font-size:10px;line-height:11.50px;color:#000;font-weight:normal;">09/08/2024</div>
<div class="t s" style="left:405.60px;width:400px;text-align:right;top:221.42px;font-family:'Liberation Serif', serif;font-size:10px;line-height:11.50px;color:#000;font-weight:normal;">20</div>
<div class="t s" style="left:508.80px;width:400px;text-align:right;top:221.42px;font-family:'Liberation Serif', serif;font-size:10px;line-height:11.50px;color:#000;font-weight:normal;">10/04/2024</div>
<div class="t s" style="left:591.70px;width:400px;text-align:right;top:221.42px;font-family:'Liberation Serif', serif;font-size:10px;line-height:11.50px;color:#f04545;font-weight:normal;">$720</div>
<div class="t s" style="left:512.90px;top:235.89px;font-family:'Liberation Serif', serif;font-size:10px;line-height:11.50px;color:#000;font-weight:normal;">Task10</div>
<div class="t s" style="left:332.80px;width:400px;text-align:right;top:235.89px;font-family:'Liberation Serif', serif;font-size:10px;line-height:11.50px;color:#000;font-weight:normal;">10/13/2024</div>
<div class="t s" style="left:405.60px;width:400px;text-align:right;top:235.89px;font-family:'Liberation Serif', serif;font-size:10px;line-height:11.50px;color:#000;font-weight:normal;">50</div>
<div class="t s" style="left:508.80px;width:400px;text-align:right;top:235.89px;font-family:'Liberation Serif', serif;font-size:10px;line-height:11.50px;color:#000;font-weight:normal;">12/20/2024</div>
<div class="t s" style="left:591.70px;width:400px;text-align:right;top:235.89px;font-family:'Liberation Serif', serif;font-size:10px;line-height:11.50px;color:#000;font-weight:normal;">$1,000</div>
<div class="t s" style="left:512.90px;top:250.38px;font-family:'Liberation Serif', serif;font-size:10px;line-height:11.50px;color:#000;font-weight:normal;">Task11</div>
<div class="t s" style="left:332.80px;width:400px;text-align:right;top:250.38px;font-family:'Liberation Serif', serif;font-size:10px;line-height:11.50px;color:#000;font-weight:normal;">11/17/2024</div>
<div class="t s" style="left:405.60px;width:400px;text-align:right;top:250.38px;font-family:'Liberation Serif', serif;font-size:10px;line-height:11.50px;color:#000;font-weight:normal;">45</div>
<div class="t s" style="left:508.80px;width:400px;text-align:right;top:250.38px;font-family:'Liberation Serif', serif;font-size:10px;line-height:11.50px;color:#000;font-weight:normal;">01/20/2025</div>
<div class="t s" style="left:591.70px;width:400px;text-align:right;top:250.38px;font-family:'Liberation Serif', serif;font-size:10px;line-height:11.50px;color:#f04545;font-weight:normal;">$1,100</div>
<div class="t s" style="left:512.90px;top:264.86px;font-family:'Liberation Serif', serif;font-size:10px;line-height:11.50px;color:#000;font-weight:normal;">Task12</div>
<div class="t s" style="left:332.80px;width:400px;text-align:right;top:264.86px;font-family:'Liberation Serif', serif;font-size:10px;line-height:11.50px;color:#000;font-weight:normal;">12/20/2024</div>
<div class="t s" style="left:405.60px;width:400px;text-align:right;top:264.86px;font-family:'Liberation Serif', serif;font-size:10px;line-height:11.50px;color:#000;font-weight:normal;">50</div>
<div class="t s" style="left:508.80px;width:400px;text-align:right;top:264.86px;font-family:'Liberation Serif', serif;font-size:10px;line-height:11.50px;color:#000;font-weight:normal;">03/03/2025</div>
<div class="t s" style="left:591.70px;width:400px;text-align:right;top:264.86px;font-family:'Liberation Serif', serif;font-size:10px;line-height:11.50px;color:#000;font-weight:normal;">$2,000</div>
<div class="t s" style="left:688.50px;width:400px;text-align:right;top:105.58px;font-family:'Liberation Serif', serif;font-size:10px;line-height:11.50px;color:#000;font-weight:normal;">01/01/2024</div>
<div class="t s" style="left:828.50px;width:600px;text-align:center;top:103.78px;font-family:'Liberation Serif', serif;font-size:10px;line-height:11.50px;color:#000;font-weight:normal;">70</div>
<div class="t s" style="left:894.00px;width:600px;text-align:center;top:104.08px;font-family:'Liberation Serif', serif;font-size:10px;line-height:11.50px;color:#000;font-weight:normal;">56</div>
<div class="t s" style="left:688.50px;width:400px;text-align:right;top:120.06px;font-family:'Liberation Serif', serif;font-size:10px;line-height:11.50px;color:#000;font-weight:normal;">02/05/2024</div>
<div class="t s" style="left:828.50px;width:600px;text-align:center;top:118.26px;font-family:'Liberation Serif', serif;font-size:10px;line-height:11.50px;color:#000;font-weight:normal;">51</div>
<div class="t s" style="left:894.00px;width:600px;text-align:center;top:118.56px;font-family:'Liberation Serif', serif;font-size:10px;line-height:11.50px;color:#000;font-weight:normal;">25.5</div>
<div class="t s" style="left:688.50px;width:400px;text-align:right;top:134.53px;font-family:'Liberation Serif', serif;font-size:10px;line-height:11.50px;color:#000;font-weight:normal;">03/12/2024</div>
<div class="t s" style="left:828.50px;width:600px;text-align:center;top:132.73px;font-family:'Liberation Serif', serif;font-size:10px;line-height:11.50px;color:#000;font-weight:normal;">42</div>
<div class="t s" style="left:894.00px;width:600px;text-align:center;top:133.03px;font-family:'Liberation Serif', serif;font-size:10px;line-height:11.50px;color:#000;font-weight:normal;">42</div>
<div class="t s" style="left:688.50px;width:400px;text-align:right;top:149.01px;font-family:'Liberation Serif', serif;font-size:10px;line-height:11.50px;color:#000;font-weight:normal;">04/15/2024</div>
<div class="t s" style="left:828.50px;width:600px;text-align:center;top:147.21px;font-family:'Liberation Serif', serif;font-size:10px;line-height:11.50px;color:#000;font-weight:normal;">56</div>
<div class="t s" style="left:894.00px;width:600px;text-align:center;top:147.51px;font-family:'Liberation Serif', serif;font-size:10px;line-height:11.50px;color:#000;font-weight:normal;">22.4</div>
<div class="t s" style="left:688.50px;width:400px;text-align:right;top:163.50px;font-family:'Liberation Serif', serif;font-size:10px;line-height:11.50px;color:#000;font-weight:normal;">05/17/2024</div>
<div class="t s" style="left:828.50px;width:600px;text-align:center;top:161.69px;font-family:'Liberation Serif', serif;font-size:10px;line-height:11.50px;color:#000;font-weight:normal;">73</div>
<div class="t s" style="left:894.00px;width:600px;text-align:center;top:162.00px;font-family:'Liberation Serif', serif;font-size:10px;line-height:11.50px;color:#000;font-weight:normal;">40.1</div>
<div class="t s" style="left:688.50px;width:400px;text-align:right;top:177.98px;font-family:'Liberation Serif', serif;font-size:10px;line-height:11.50px;color:#000;font-weight:normal;">06/23/2024</div>
<div class="t s" style="left:828.50px;width:600px;text-align:center;top:176.18px;font-family:'Liberation Serif', serif;font-size:10px;line-height:11.50px;color:#000;font-weight:normal;">148</div>
<div class="t s" style="left:894.00px;width:600px;text-align:center;top:176.48px;font-family:'Liberation Serif', serif;font-size:10px;line-height:11.50px;color:#000;font-weight:normal;">29.6</div>
<div class="t s" style="left:688.50px;width:400px;text-align:right;top:192.45px;font-family:'Liberation Serif', serif;font-size:10px;line-height:11.50px;color:#000;font-weight:normal;">07/28/2024</div>
<div class="t s" style="left:828.50px;width:600px;text-align:center;top:190.65px;font-family:'Liberation Serif', serif;font-size:10px;line-height:11.50px;color:#000;font-weight:normal;">82</div>
<div class="t s" style="left:894.00px;width:600px;text-align:center;top:190.95px;font-family:'Liberation Serif', serif;font-size:10px;line-height:11.50px;color:#000;font-weight:normal;">27.0</div>
<div class="t s" style="left:688.50px;width:400px;text-align:right;top:206.94px;font-family:'Liberation Serif', serif;font-size:10px;line-height:11.50px;color:#000;font-weight:normal;">08/04/2024</div>
<div class="t s" style="left:828.50px;width:600px;text-align:center;top:205.13px;font-family:'Liberation Serif', serif;font-size:10px;line-height:11.50px;color:#000;font-weight:normal;">40</div>
<div class="t s" style="left:894.00px;width:600px;text-align:center;top:205.44px;font-family:'Liberation Serif', serif;font-size:10px;line-height:11.50px;color:#000;font-weight:normal;">11.2</div>
<div class="t s" style="left:688.50px;width:400px;text-align:right;top:221.42px;font-family:'Liberation Serif', serif;font-size:10px;line-height:11.50px;color:#000;font-weight:normal;">09/08/2024</div>
<div class="t s" style="left:828.50px;width:600px;text-align:center;top:219.62px;font-family:'Liberation Serif', serif;font-size:10px;line-height:11.50px;color:#000;font-weight:normal;">26</div>
<div class="t s" style="left:894.00px;width:600px;text-align:center;top:219.92px;font-family:'Liberation Serif', serif;font-size:10px;line-height:11.50px;color:#000;font-weight:normal;">20.8</div>
<div class="t s" style="left:688.50px;width:400px;text-align:right;top:235.89px;font-family:'Liberation Serif', serif;font-size:10px;line-height:11.50px;color:#000;font-weight:normal;">10/13/2024</div>
<div class="t s" style="left:828.50px;width:600px;text-align:center;top:234.09px;font-family:'Liberation Serif', serif;font-size:10px;line-height:11.50px;color:#000;font-weight:normal;">68</div>
<div class="t s" style="left:894.00px;width:600px;text-align:center;top:234.39px;font-family:'Liberation Serif', serif;font-size:10px;line-height:11.50px;color:#000;font-weight:normal;">68</div>
<div class="t s" style="left:688.50px;width:400px;text-align:right;top:250.38px;font-family:'Liberation Serif', serif;font-size:10px;line-height:11.50px;color:#000;font-weight:normal;">11/17/2024</div>
<div class="t s" style="left:828.50px;width:600px;text-align:center;top:248.57px;font-family:'Liberation Serif', serif;font-size:10px;line-height:11.50px;color:#000;font-weight:normal;">64</div>
<div class="t s" style="left:894.00px;width:600px;text-align:center;top:248.88px;font-family:'Liberation Serif', serif;font-size:10px;line-height:11.50px;color:#000;font-weight:normal;">64</div>
<div class="t s" style="left:688.50px;width:400px;text-align:right;top:264.86px;font-family:'Liberation Serif', serif;font-size:10px;line-height:11.50px;color:#000;font-weight:normal;">12/20/2024</div>
<div class="t s" style="left:828.50px;width:600px;text-align:center;top:263.06px;font-family:'Liberation Serif', serif;font-size:10px;line-height:11.50px;color:#000;font-weight:normal;">73</div>
<div class="t s" style="left:894.00px;width:600px;text-align:center;top:263.36px;font-family:'Liberation Serif', serif;font-size:10px;line-height:11.50px;color:#000;font-weight:normal;">43.8</div>
<div class="r" style="left:155.60px;top:117.80px;width:101.90px;height:12.40px;background:transparent;border:1px solid #3f8f5c;box-sizing:border-box;"></div>
<div class="t" style="left:41.80px;top:81.25px;font-family:'Liberation Sans', sans-serif;font-size:9.5px;line-height:10.92px;color:#fff;font-weight:bold;">Task</div>
<div class="t" style="left:-93.60px;width:600px;text-align:center;top:81.25px;font-family:'Liberation Sans', sans-serif;font-size:9.5px;line-height:10.92px;color:#fff;font-weight:bold;">Planned start date</div>
<div class="t" style="left:-9.00px;width:600px;text-align:center;top:74.45px;font-family:'Liberation Sans', sans-serif;font-size:9.5px;line-height:10.92px;color:#fff;font-weight:bold;">Planned</div>
<div class="t" style="left:-9.00px;width:600px;text-align:center;top:87.05px;font-family:'Liberation Sans', sans-serif;font-size:9.5px;line-height:10.92px;color:#fff;font-weight:bold;">work days</div>
<div class="t" style="left:75.00px;width:600px;text-align:center;top:81.25px;font-family:'Liberation Sans', sans-serif;font-size:9.5px;line-height:10.92px;color:#fff;font-weight:bold;">Planned end date</div>
<div class="t" style="left:166.00px;width:600px;text-align:center;top:81.25px;font-family:'Liberation Sans', sans-serif;font-size:9.5px;line-height:10.92px;color:#fff;font-weight:bold;">Planned Budget</div>
<div class="t" style="left:507.50px;top:81.25px;font-family:'Liberation Sans', sans-serif;font-size:9.5px;line-height:10.92px;color:#fff;font-weight:bold;">Task2</div>
<div class="t" style="left:375.00px;width:600px;text-align:center;top:81.25px;font-family:'Liberation Sans', sans-serif;font-size:9.5px;line-height:10.92px;color:#fff;font-weight:bold;">Actual start date</div>
<div class="t" style="left:471.50px;width:600px;text-align:center;top:74.25px;font-family:'Liberation Sans', sans-serif;font-size:9.5px;line-height:10.92px;color:#fff;font-weight:bold;">Actual work</div>
<div class="t" style="left:471.50px;width:600px;text-align:center;top:87.25px;font-family:'Liberation Sans', sans-serif;font-size:9.5px;line-height:10.92px;color:#fff;font-weight:bold;">days</div>
<div class="t" style="left:560.00px;width:600px;text-align:center;top:81.25px;font-family:'Liberation Sans', sans-serif;font-size:9.5px;line-height:10.92px;color:#fff;font-weight:bold;">Actual end date</div>
<div class="t" style="left:655.30px;width:600px;text-align:center;top:81.25px;font-family:'Liberation Sans', sans-serif;font-size:9.5px;line-height:10.92px;color:#fff;font-weight:bold;">Actual cost</div>
<div class="t" style="left:744.60px;width:600px;text-align:center;top:74.75px;font-family:'Liberation Sans', sans-serif;font-size:9.5px;line-height:10.92px;color:#fff;font-weight:bold;">Timeline chart start</div>
<div class="t" style="left:744.80px;width:600px;text-align:center;top:87.25px;font-family:'Liberation Sans', sans-serif;font-size:9.5px;line-height:10.92px;color:#fff;font-weight:bold;">date</div>
<div class="t" style="left:829.80px;width:600px;text-align:center;top:74.75px;font-family:'Liberation Sans', sans-serif;font-size:9.5px;line-height:10.92px;color:#fff;font-weight:bold;">Total No. of</div>
<div class="t" style="left:828.20px;width:600px;text-align:center;top:87.25px;font-family:'Liberation Sans', sans-serif;font-size:9.5px;line-height:10.92px;color:#fff;font-weight:bold;">days</div>
<div class="t" style="left:894.50px;width:600px;text-align:center;top:74.75px;font-family:'Liberation Sans', sans-serif;font-size:9.5px;line-height:10.92px;color:#fff;font-weight:bold;">Days</div>
<div class="t" style="left:892.00px;width:600px;text-align:center;top:87.25px;font-family:'Liberation Sans', sans-serif;font-size:9.5px;line-height:10.92px;color:#fff;font-weight:bold;">complete</div>
<div class="dd" style="left:140.00px;top:87.00px"><i></i></div>
<div class="dd" style="left:244.30px;top:87.00px"><i></i></div>
<div class="dd" style="left:308.30px;top:87.00px"><i></i></div>
<div class="dd" style="left:412.80px;top:87.00px"><i></i></div>
<div class="dd" style="left:490.80px;top:87.00px"><i></i></div>
<div class="dd" style="left:600.60px;top:87.00px"><i></i></div>
<div class="dd" style="left:721.00px;top:87.00px"><i></i></div>
<div class="dd" style="left:793.20px;top:87.00px"><i></i></div>
<div class="dd" style="left:897.00px;top:87.00px"><i></i></div>
<div class="dd" style="left:984.40px;top:87.00px"><i></i></div>
<div class="dd" style="left:1076.60px;top:87.00px"><i></i></div>
<div class="dd" style="left:1152.10px;top:87.00px"><i></i></div>
<div class="tri" style="left:148.80px;top:69.70px;border-width:0 5.3px 5.3px 0"></div>
<div class="tri" style="left:609.50px;top:69.50px;border-width:0 5.5px 5.5px 0"></div>
<div class="tri" style="left:1085.10px;top:69.50px;border-width:0 5.3px 5.3px 0"></div>
<div class="r" style="left:39.10px;top:301.50px;width:115.00px;height:18.40px;background:#061022;"></div>
<div class="r" style="left:154.10px;top:301.50px;width:105.00px;height:18.40px;background:#4e89fb;"></div>
<div class="t" style="left:-202.80px;width:600px;text-align:center;top:305.55px;font-family:'Liberation Sans', sans-serif;font-size:9.5px;line-height:10.92px;color:#fff;font-weight:bold;">Select timeline:</div>
<div class="t" style="left:-93.00px;width:600px;text-align:center;top:305.55px;font-family:'Liberation Sans', sans-serif;font-size:9.5px;line-height:10.92px;color:#fff;font-weight:bold;">Actual timeline</div>
<div class="t" style="left:279.00px;width:600px;text-align:center;top:337.48px;font-family:'Liberation Sans', sans-serif;font-size:15px;line-height:17.25px;color:#757575;font-weight:bold;transform:scaleX(0.97);">Actual timeline</div>
<div class="t" style="left:-175.60px;width:600px;text-align:center;top:374.36px;font-family:'Liberation Sans', sans-serif;font-size:9.7px;line-height:11.15px;color:#000;font-weight:normal;transform:scaleX(0.91);">10-Dec-2023</div>
<div class="t" style="left:-78.80px;width:600px;text-align:center;top:374.36px;font-family:'Liberation Sans', sans-serif;font-size:9.7px;line-height:11.15px;color:#000;font-weight:normal;transform:scaleX(0.91);">29-Jan-2024</div>
<div class="t" style="left:18.00px;width:600px;text-align:center;top:374.36px;font-family:'Liberation Sans', sans-serif;font-size:9.7px;line-height:11.15px;color:#000;font-weight:normal;transform:scaleX(0.91);">19-Mar-2024</div>
<div class="t" style="left:114.80px;width:600px;text-align:center;top:374.36px;font-family:'Liberation Sans', sans-serif;font-size:9.7px;line-height:11.15px;color:#000;font-weight:normal;transform:scaleX(0.91);">8-May-2024</div>
<div class="t" style="left:211.60px;width:600px;text-align:center;top:374.36px;font-family:'Liberation Sans', sans-serif;font-size:9.7px;line-height:11.15px;color:#000;font-weight:normal;transform:scaleX(0.91);">27-Jun-2024</div>
<div class="t" style="left:308.40px;width:600px;text-align:center;top:374.36px;font-family:'Liberation Sans', sans-serif;font-size:9.7px;line-height:11.15px;color:#000;font-weight:normal;transform:scaleX(0.91);">16-Aug-2024</div>
<div class="t" style="left:405.20px;width:600px;text-align:center;top:374.36px;font-family:'Liberation Sans', sans-serif;font-size:9.7px;line-height:11.15px;color:#000;font-weight:normal;transform:scaleX(0.91);">5-Oct-2024</div>
<div class="t" style="left:502.00px;width:600px;text-align:center;top:374.36px;font-family:'Liberation Sans', sans-serif;font-size:9.7px;line-height:11.15px;color:#000;font-weight:normal;transform:scaleX(0.91);">24-Nov-2024</div>
<div class="t" style="left:598.80px;width:600px;text-align:center;top:374.36px;font-family:'Liberation Sans', sans-serif;font-size:9.7px;line-height:11.15px;color:#000;font-weight:normal;transform:scaleX(0.91);">13-Jan-2025</div>
<div class="t" style="left:695.60px;width:600px;text-align:center;top:374.36px;font-family:'Liberation Sans', sans-serif;font-size:9.7px;line-height:11.15px;color:#000;font-weight:normal;transform:scaleX(0.91);">4-Mar-2025</div>
<div class="t" style="left:792.40px;width:600px;text-align:center;top:374.36px;font-family:'Liberation Sans', sans-serif;font-size:9.7px;line-height:11.15px;color:#000;font-weight:normal;transform:scaleX(0.91);">23-Apr-2025</div>
<div class="r" style="left:124.40px;top:391.20px;width:968.20px;height:1.00px;background:#cfcfcf;"></div>
<div class="r" style="left:123.90px;top:391.20px;width:1.00px;height:160.00px;background:#cfcfcf;"></div>
<div class="r" style="left:220.70px;top:391.20px;width:1.00px;height:160.00px;background:#cfcfcf;"></div>
<div class="r" style="left:317.50px;top:391.20px;width:1.00px;height:160.00px;background:#cfcfcf;"></div>
<div class="r" style="left:414.30px;top:391.20px;width:1.00px;height:160.00px;background:#cfcfcf;"></div>
<div class="r" style="left:511.10px;top:391.20px;width:1.00px;height:160.00px;background:#cfcfcf;"></div>
<div class="r" style="left:607.90px;top:391.20px;width:1.00px;height:160.00px;background:#cfcfcf;"></div>
<div class="r" style="left:704.70px;top:391.20px;width:1.00px;height:160.00px;background:#cfcfcf;"></div>
<div class="r" style="left:801.50px;top:391.20px;width:1.00px;height:160.00px;background:#cfcfcf;"></div>
<div class="r" style="left:898.30px;top:391.20px;width:1.00px;height:160.00px;background:#cfcfcf;"></div>
<div class="r" style="left:995.10px;top:391.20px;width:1.00px;height:160.00px;background:#cfcfcf;"></div>
<div class="r" style="left:1091.90px;top:391.20px;width:1.00px;height:160.00px;background:#cfcfcf;"></div>
<div class="r" style="left:3.00px;top:545.50px;width:792.00px;height:2.00px;background:#8c8c8c;border-radius:1px;"></div>
<div class="r" style="left:166.99px;top:392.20px;width:135.52px;height:1.80px;background:#bcbcbc;"></div>
<div class="r" style="left:234.75px;top:396.18px;width:98.74px;height:1.80px;background:#bcbcbc;"></div>
<div class="r" style="left:304.45px;top:400.16px;width:81.31px;height:1.80px;background:#bcbcbc;"></div>
<div class="r" style="left:370.27px;top:404.14px;width:108.42px;height:1.80px;background:#bcbcbc;"></div>
<div class="r" style="left:432.22px;top:408.12px;width:141.33px;height:1.80px;background:#bcbcbc;"></div>
<div class="r" style="left:503.86px;top:412.10px;width:286.53px;height:1.80px;background:#bcbcbc;"></div>
<div class="r" style="left:571.62px;top:416.08px;width:158.75px;height:1.80px;background:#bcbcbc;"></div>
<div class="r" style="left:585.17px;top:420.06px;width:77.44px;height:1.80px;background:#bcbcbc;"></div>
<div class="r" style="left:652.93px;top:424.04px;width:50.34px;height:1.80px;background:#bcbcbc;"></div>
<div class="r" style="left:720.69px;top:428.02px;width:131.65px;height:1.80px;background:#bcbcbc;"></div>
<div class="r" style="left:788.45px;top:432.00px;width:123.90px;height:1.80px;background:#bcbcbc;"></div>
<div class="r" style="left:852.34px;top:435.98px;width:141.33px;height:1.80px;background:#bcbcbc;"></div>
<div class="r" style="left:161.19px;top:393.60px;width:11.60px;height:153.40px;background:#4a89f0;"></div>
<div class="r" style="left:228.95px;top:397.55px;width:11.60px;height:100.25px;background:#4a89f0;"></div>
<div class="r" style="left:232.75px;top:496.80px;width:4.00px;height:7.00px;background:#4a89f0;"></div>
<div class="r" style="left:298.65px;top:401.50px;width:11.60px;height:145.50px;background:#4a89f0;"></div>
<div class="r" style="left:364.47px;top:405.45px;width:11.60px;height:88.35px;background:#4a89f0;"></div>
<div class="r" style="left:368.27px;top:492.80px;width:4.00px;height:7.00px;background:#4a89f0;"></div>
<div class="r" style="left:426.42px;top:409.40px;width:11.60px;height:137.60px;background:#4a89f0;"></div>
<div class="r" style="left:498.06px;top:413.35px;width:11.60px;height:116.45px;background:#4a89f0;"></div>
<div class="r" style="left:501.86px;top:528.80px;width:4.00px;height:6.70px;background:#4a89f0;"></div>
<div class="r" style="left:565.82px;top:417.30px;width:11.60px;height:106.50px;background:#4a89f0;"></div>
<div class="r" style="left:569.62px;top:522.80px;width:4.00px;height:7.00px;background:#4a89f0;"></div>
<div class="r" style="left:579.37px;top:421.25px;width:11.60px;height:44.25px;background:#4a89f0;"></div>
<div class="r" style="left:583.17px;top:464.50px;width:4.00px;height:6.70px;background:#4a89f0;"></div>
<div class="r" style="left:647.13px;top:425.20px;width:11.60px;height:81.30px;background:#4a89f0;"></div>
<div class="r" style="left:650.93px;top:505.50px;width:4.00px;height:7.00px;background:#4a89f0;"></div>
<div class="r" style="left:714.89px;top:429.15px;width:11.60px;height:117.85px;background:#4a89f0;"></div>
<div class="r" style="left:782.65px;top:433.10px;width:11.60px;height:113.90px;background:#4a89f0;"></div>
<div class="r" style="left:846.54px;top:437.05px;width:11.60px;height:109.95px;background:#4a89f0;"></div>
<div class="t" style="left:-65.25px;width:600px;text-align:center;top:387.88px;font-family:'Liberation Sans', sans-serif;font-size:10px;line-height:11.50px;color:#111;font-weight:normal;transform:scaleX(0.97);">70</div>
<div class="t" style="left:-15.88px;width:600px;text-align:center;top:391.87px;font-family:'Liberation Sans', sans-serif;font-size:10px;line-height:11.50px;color:#111;font-weight:normal;transform:scaleX(0.97);">51</div>
<div class="t" style="left:45.10px;width:600px;text-align:center;top:395.84px;font-family:'Liberation Sans', sans-serif;font-size:10px;line-height:11.50px;color:#111;font-weight:normal;transform:scaleX(0.97);">42</div>
<div class="t" style="left:124.48px;width:600px;text-align:center;top:399.82px;font-family:'Liberation Sans', sans-serif;font-size:10px;line-height:11.50px;color:#111;font-weight:normal;transform:scaleX(0.97);">56</div>
<div class="t" style="left:202.89px;width:600px;text-align:center;top:403.81px;font-family:'Liberation Sans', sans-serif;font-size:10px;line-height:11.50px;color:#111;font-weight:normal;transform:scaleX(0.97);">73</div>
<div class="t" style="left:347.12px;width:600px;text-align:center;top:407.78px;font-family:'Liberation Sans', sans-serif;font-size:10px;line-height:11.50px;color:#111;font-weight:normal;transform:scaleX(0.97);">148</div>
<div class="t" style="left:350.99px;width:600px;text-align:center;top:411.76px;font-family:'Liberation Sans', sans-serif;font-size:10px;line-height:11.50px;color:#111;font-weight:normal;transform:scaleX(0.97);">82</div>
<div class="t" style="left:323.89px;width:600px;text-align:center;top:415.75px;font-family:'Liberation Sans', sans-serif;font-size:10px;line-height:11.50px;color:#111;font-weight:normal;transform:scaleX(0.97);">40</div>
<div class="t" style="left:378.10px;width:600px;text-align:center;top:419.72px;font-family:'Liberation Sans', sans-serif;font-size:10px;line-height:11.50px;color:#111;font-weight:normal;transform:scaleX(0.97);">26</div>
<div class="t" style="left:486.51px;width:600px;text-align:center;top:423.70px;font-family:'Liberation Sans', sans-serif;font-size:10px;line-height:11.50px;color:#111;font-weight:normal;transform:scaleX(0.97);">68</div>
<div class="t" style="left:550.40px;width:600px;text-align:center;top:427.69px;font-family:'Liberation Sans', sans-serif;font-size:10px;line-height:11.50px;color:#111;font-weight:normal;transform:scaleX(0.97);">64</div>
<div class="t" style="left:623.00px;width:600px;text-align:center;top:431.66px;font-family:'Liberation Sans', sans-serif;font-size:10px;line-height:11.50px;color:#111;font-weight:normal;transform:scaleX(0.97);">73</div>
<div class="t" style="left:-284.50px;width:400px;text-align:right;top:387.37px;font-family:'Liberation Sans', sans-serif;font-size:9.8px;line-height:11.27px;color:#111;font-weight:normal;transform-origin:100% 50%;transform:scaleX(0.94);">Website design</div>
<div class="t" style="left:-284.50px;width:400px;text-align:right;top:391.24px;font-family:'Liberation Sans', sans-serif;font-size:9.8px;line-height:11.27px;color:#111;font-weight:normal;transform-origin:100% 50%;transform:scaleX(0.94);">On-page SEO</div>
<div class="t" style="left:-284.50px;width:400px;text-align:right;top:395.11px;font-family:'Liberation Sans', sans-serif;font-size:9.8px;line-height:11.27px;color:#111;font-weight:normal;transform-origin:100% 50%;transform:scaleX(0.94);">New landing page</div>
<div class="t" style="left:-284.50px;width:400px;text-align:right;top:398.98px;font-family:'Liberation Sans', sans-serif;font-size:9.8px;line-height:11.27px;color:#111;font-weight:normal;transform-origin:100% 50%;transform:scaleX(0.94);">Task4</div>
<div class="t" style="left:-284.50px;width:400px;text-align:right;top:402.85px;font-family:'Liberation Sans', sans-serif;font-size:9.8px;line-height:11.27px;color:#111;font-weight:normal;transform-origin:100% 50%;transform:scaleX(0.94);">Task5</div>
<div class="t" style="left:-284.50px;width:400px;text-align:right;top:406.72px;font-family:'Liberation Sans', sans-serif;font-size:9.8px;line-height:11.27px;color:#111;font-weight:normal;transform-origin:100% 50%;transform:scaleX(0.94);">Task6</div>
<div class="t" style="left:-284.50px;width:400px;text-align:right;top:410.59px;font-family:'Liberation Sans', sans-serif;font-size:9.8px;line-height:11.27px;color:#111;font-weight:normal;transform-origin:100% 50%;transform:scaleX(0.94);">Task7</div>
<div class="t" style="left:-284.50px;width:400px;text-align:right;top:414.46px;font-family:'Liberation Sans', sans-serif;font-size:9.8px;line-height:11.27px;color:#111;font-weight:normal;transform-origin:100% 50%;transform:scaleX(0.94);">Task8</div>
<div class="t" style="left:-284.50px;width:400px;text-align:right;top:418.33px;font-family:'Liberation Sans', sans-serif;font-size:9.8px;line-height:11.27px;color:#111;font-weight:normal;transform-origin:100% 50%;transform:scaleX(0.94);">Task9</div>
<div class="t" style="left:-284.50px;width:400px;text-align:right;top:422.20px;font-family:'Liberation Sans', sans-serif;font-size:9.8px;line-height:11.27px;color:#111;font-weight:normal;transform-origin:100% 50%;transform:scaleX(0.94);">Task10</div>
<div class="t" style="left:-284.50px;width:400px;text-align:right;top:426.07px;font-family:'Liberation Sans', sans-serif;font-size:9.8px;line-height:11.27px;color:#111;font-weight:normal;transform-origin:100% 50%;transform:scaleX(0.94);">Task11</div>
<div class="t" style="left:-284.50px;width:400px;text-align:right;top:429.94px;font-family:'Liberation Sans', sans-serif;font-size:9.8px;line-height:11.27px;color:#111;font-weight:normal;transform-origin:100% 50%;transform:scaleX(0.94);">Task12</div>
<div class="t" style="left:1192.50px;top:398.15px;font-family:'Liberation Sans', sans-serif;font-size:9.6px;line-height:11.04px;color:#111;font-weight:normal;">Website design</div>
<div class="t" style="left:1182.50px;top:445.15px;font-family:'Liberation Sans', sans-serif;font-size:9.6px;line-height:11.04px;color:#111;font-weight:normal;">New landing page</div></body></html>
